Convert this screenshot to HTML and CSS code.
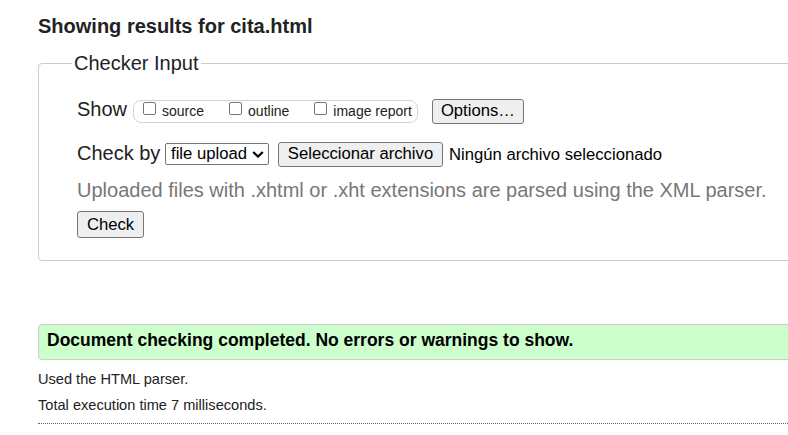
FILE: index.html
```html
<!DOCTYPE html>
<html lang="en">
<head>
<meta charset="utf-8">
<title>Showing results for cita.html - Nu Html Checker</title>
<link rel="stylesheet" href="styles.css">
</head>
<body>
<div class="page">
  <div class="content">
    <h2 class="title">Showing results for cita.html</h2>
    <form class="checker">
      <fieldset class="fs">
        <legend class="legend">Checker Input</legend>
        <div class="row row-show">
          <span class="big-label show-label">Show</span>
          <span class="pill">
            <label class="opt"><input type="checkbox" class="cb"><span>source</span></label>
            <label class="opt"><input type="checkbox" class="cb"><span>outline</span></label>
            <label class="opt"><input type="checkbox" class="cb"><span>image report</span></label>
          </span>
          <button type="button" class="btn btn-options">Options…</button>
        </div>
        <div class="row row-check">
          <span class="big-label check-label">Check by</span>
          <span class="select"><span class="select-text">file upload</span><svg class="chev" width="12" height="7" viewBox="0 0 12 7"><path d="M1.2 1 L6 5.6 L10.8 1" fill="none" stroke="#000" stroke-width="2.2"/></svg></span>
          <button type="button" class="btn btn-file">Seleccionar archivo</button>
          <span class="file-name">Ningún archivo seleccionado</span>
        </div>
        <p class="hint">Uploaded files with .xhtml or .xht extensions are parsed using the XML parser.</p>
        <div class="row row-submit">
          <button type="button" class="btn btn-check">Check</button>
        </div>
      </fieldset>
    </form>
    <p class="success">Document checking completed. No errors or warnings to show.</p>
    <p class="details">Used the HTML parser.</p>
    <p class="details">Total execution time 7 milliseconds.</p>
    <div class="rule"></div>
  </div>
</div>
</body>
</html>
```

FILE: styles.css
```css
html, body {
  margin: 0;
  padding: 0;
  background: #fff;
}

body {
  font-family: "Liberation Sans", Arial, sans-serif;
  color: #222;
}

.page {
  width: 788px;
  height: 435px;
  overflow: hidden;
  padding-left: 38px;
  box-sizing: border-box;
}

.content {
  width: 800px;
}

.title {
  margin: 14px 0 0 0;
  font-size: 20px;
  line-height: 24px;
  font-weight: bold;
  color: #222;
}

.checker {
  margin: 13px 0 0 0;
}

.fs {
  margin: 0;
  border: 1px solid #ccc;
  border-radius: 4px;
  padding: 22px 0 22px 38px;
  min-width: 0;
}

.legend {
  margin-left: -5px;
  padding: 0 2px;
  font-size: 20px;
  line-height: 24px;
  color: #222;
}

.row {
  display: flex;
  align-items: flex-start;
}

.big-label {
  font-size: 20px;
  line-height: 24px;
  white-space: nowrap;
}

.row-show {
  height: 27px;
}

.show-label {
  margin-right: 6px;
}

.pill {
  display: flex;
  gap: 25px;
  margin-top: 3px;
  height: 23px;
  box-sizing: border-box;
  border: 1px solid #d4d4d4;
  border-radius: 8px;
  padding: 0 5px 0 9px;
}

.opt {
  display: flex;
  align-items: flex-start;
  gap: 6px;
  font-size: 14px;
  line-height: 21px;
  color: #222;
  white-space: nowrap;
}

.cb {
  appearance: none;
  -webkit-appearance: none;
  width: 13px;
  height: 13px;
  margin: 1px 0 0 0;
  box-sizing: border-box;
  border: 1px solid #767676;
  border-radius: 2px;
  background: #fff;
}

.btn {
  display: inline-flex;
  align-items: center;
  justify-content: center;
  box-sizing: border-box;
  margin: 0;
  font-family: "Liberation Sans", Arial, sans-serif;
  font-size: 16.67px;
  color: #000;
  background: #efefef;
  border: 1px solid #767676;
  border-radius: 3px;
  white-space: nowrap;
}

.btn-options {
  margin: 2px 0 0 14px;
  width: 92px;
  height: 25px;
  padding: 0 0 2px 0;
}

.row-check {
  margin-top: 18px;
  height: 25px;
}

.check-label {
  margin-top: -1px;
  width: 88px;
}

.select {
  display: flex;
  align-items: center;
  justify-content: space-between;
  margin-top: 1px;
  width: 104px;
  height: 22px;
  box-sizing: border-box;
  border: 1px solid #767676;
  border-radius: 2px;
  padding: 0 4px 0 5px;
  font-size: 16.67px;
  color: #000;
  background: #fff;
  white-space: nowrap;
}

.chev {
  display: block;
  margin-top: 1px;
}

.btn-file {
  margin-left: 9px;
  width: 165px;
  height: 25px;
  padding: 0 0 2px 0;
}

.file-name {
  margin-left: 6px;
  font-size: 16.67px;
  line-height: 25px;
  padding-bottom: 2px;
  color: #000;
  white-space: nowrap;
}

.hint {
  margin: 11px 0 0 0;
  font-size: 20px;
  line-height: 24px;
  color: #777;
  white-space: nowrap;
}

.row-submit {
  margin-top: 9px;
}

.btn-check {
  width: 67px;
  height: 27px;
  padding: 0;
}

.success {
  margin: 63px 0 0 0;
  box-sizing: border-box;
  height: 36px;
  border: 1px solid #ccc;
  border-radius: 4px;
  background: #ccffcc;
  padding: 3px 8px 0 8px;
  font-size: 17.5px;
  line-height: 24px;
  font-weight: bold;
  color: #000;
}

.details {
  margin: 0;
  font-size: 14.6px;
  line-height: 26px;
  color: #222;
}

.success + .details {
  margin-top: 6px;
}

.rule {
  margin-top: 5px;
  border-top: 1px dotted #666;
}
```
